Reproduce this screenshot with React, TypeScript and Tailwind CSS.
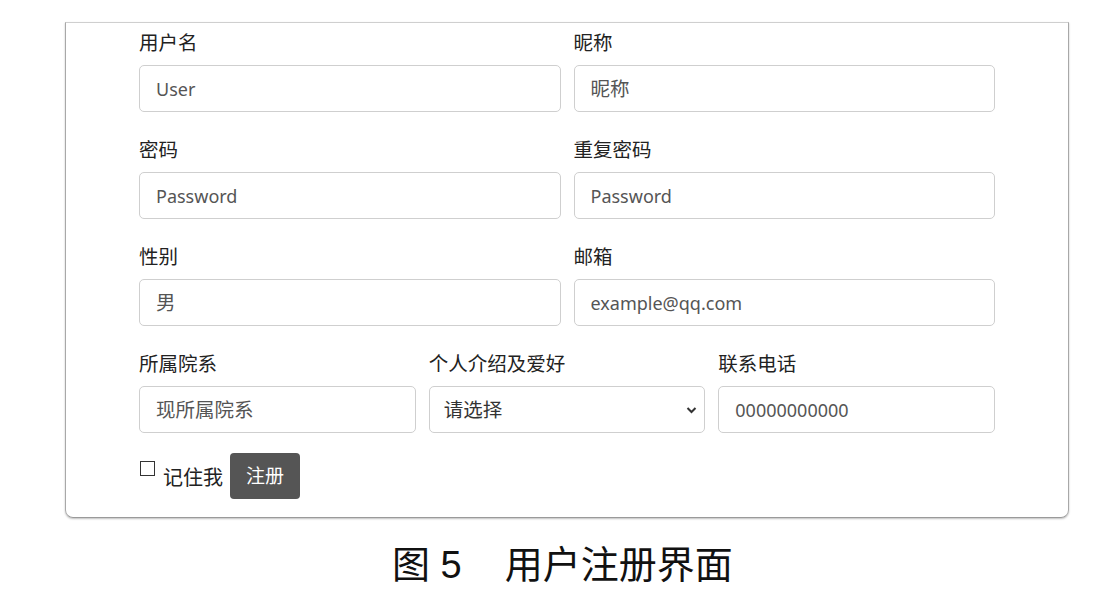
import React from 'react';

const font = { fontFamily: '"Noto Sans", "Noto Sans CJK SC", sans-serif' };

function Field({ label, placeholder, cjk = false }: { label: string; placeholder: string; cjk?: boolean }) {
  return (
    <div className="flex flex-col">
      <label className="h-[30px] text-[19.5px] leading-[30px] text-[#222]">{label}</label>
      <input
        className={`mt-[7px] h-[47px] w-full rounded-[5px] border border-[#cfcfcf] bg-white px-4 text-[#444] placeholder:text-[#555] outline-none ${cjk ? 'text-[19.5px]' : 'text-[18px]'}`}
        placeholder={placeholder}
        style={font}
      />
    </div>
  );
}

export default function App() {
  return (
    <div className="h-[606px] w-[1102px] bg-white" style={font}>
      <div className="pt-[22px] pl-[65px]">
        <div className="w-[1004px] rounded-b-[8px] border border-t-[#cfcfcf] border-x-[#a8a8a8] border-b-[#9a9a9a] px-[73px] pt-[5px] pb-[18px] shadow-[0_1px_2px_rgba(0,0,0,0.25)]">
          <div className="grid grid-cols-2 gap-x-[13px] gap-y-[23px]">
            <Field label="用户名" placeholder="User" />
            <Field label="昵称" placeholder="昵称" cjk />
            <Field label="密码" placeholder="Password" />
            <Field label="重复密码" placeholder="Password" />
            <Field label="性别" placeholder="男" cjk />
            <Field label="邮箱" placeholder="example@qq.com" />
          </div>
          <div className="mt-[23px] grid grid-cols-3 gap-x-[13px]">
            <Field label="所属院系" placeholder="现所属院系" cjk />
            <div className="flex flex-col">
              <label className="h-[30px] text-[19.5px] leading-[30px] text-[#222]">个人介绍及爱好</label>
              <div className="relative mt-[7px] flex h-[47px] items-center rounded-[5px] border border-[#cfcfcf] bg-white px-[14px] text-[19.5px] text-[#333]">
                请选择
                <svg className="absolute right-[7px] top-[19px]" width="11" height="8" viewBox="0 0 11 8">
                  <path d="M1.5 2 L5.5 6 L9.5 2" fill="none" stroke="#333" strokeWidth="2" />
                </svg>
              </div>
            </div>
            <Field label="联系电话" placeholder="00000000000" />
          </div>
          <div className="mt-[20px] flex items-center">
            <span className="mb-[16px] ml-[1px] h-[15px] w-[15px] border border-[#333] bg-white" />
            <span className="ml-[8px] mt-[4px] text-[20px] text-[#222]">记住我</span>
            <button className="ml-[7px] h-[46px] w-[70px] rounded-[4px] bg-[#555] text-[19px] text-white">注册</button>
          </div>
        </div>
      </div>
      <div className="mt-[22px] flex pl-[392px] text-[38px] leading-[50px] text-[#111]" style={{ fontFamily: '"Liberation Sans", "Noto Sans CJK SC", sans-serif' }}>
        <span>图 5</span>
        <span className="ml-[43px]">用户注册界面</span>
      </div>
    </div>
  );
}
